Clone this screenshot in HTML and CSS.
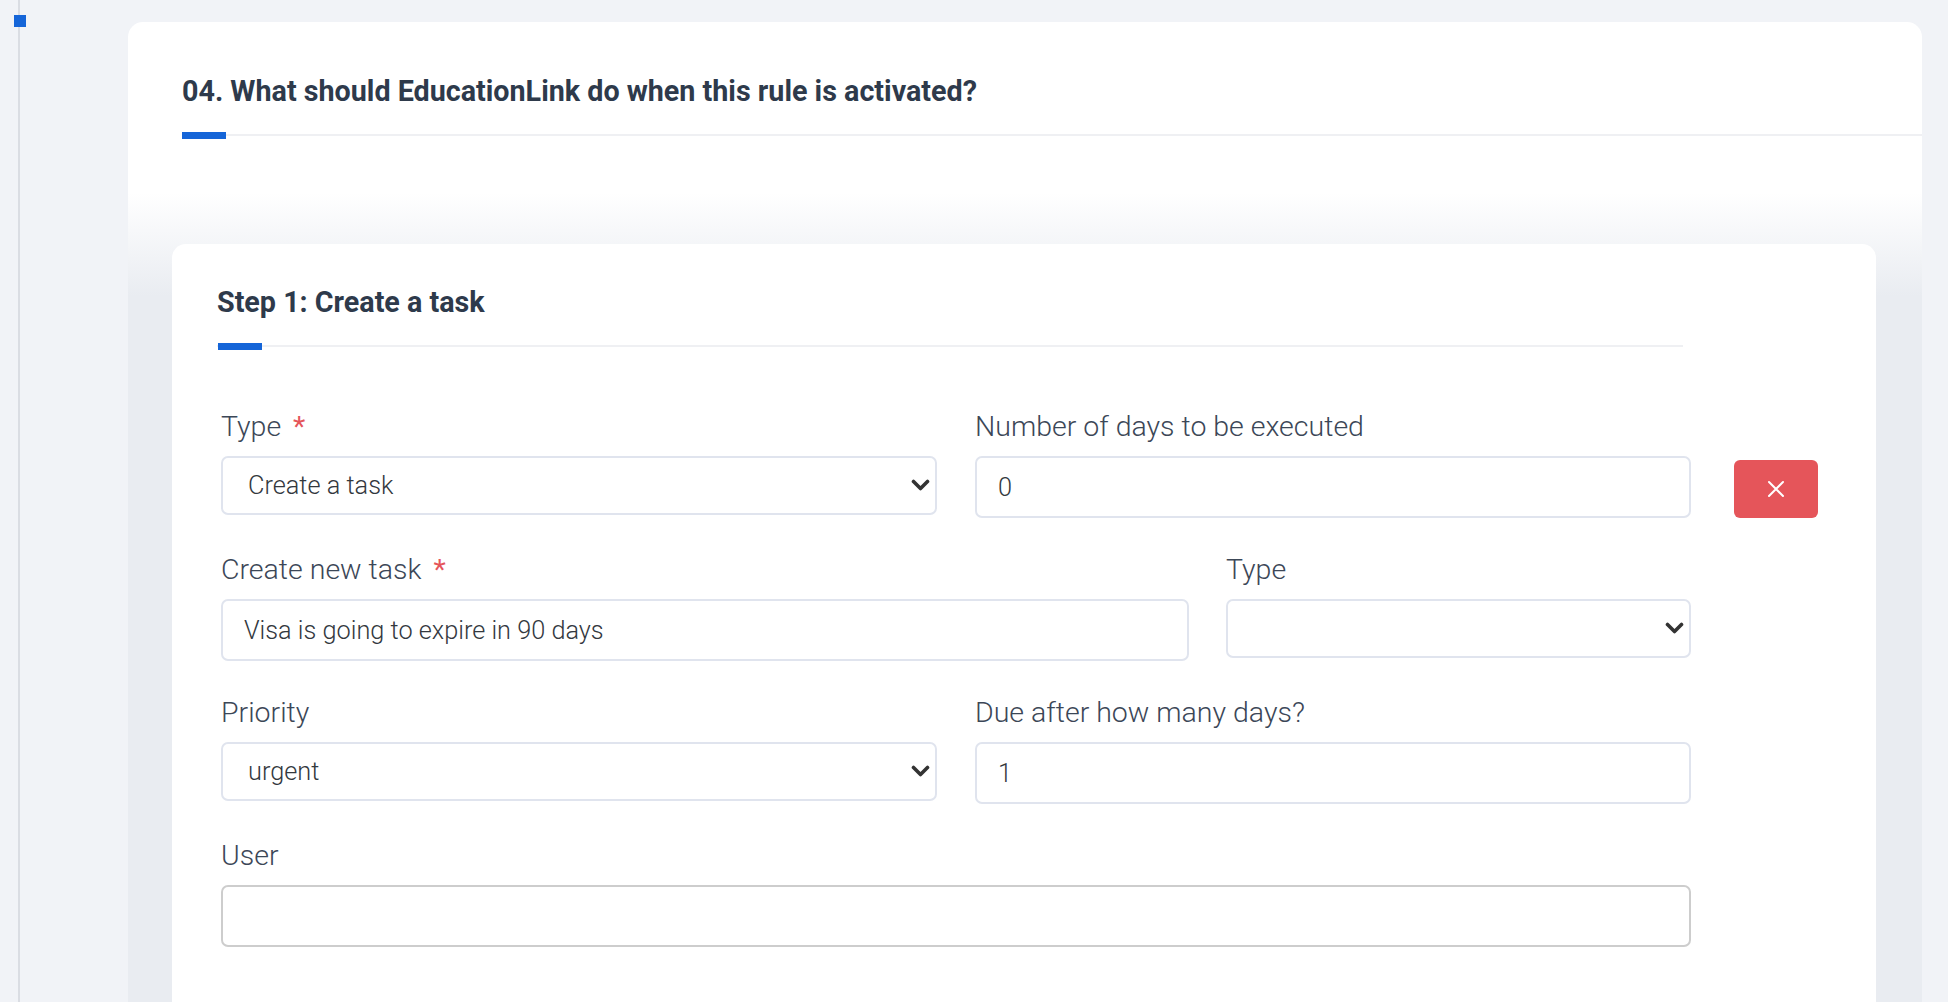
FILE: index.html
```html
<!DOCTYPE html>
<html lang="en">
	<head>
		<title>Automation rule - actions</title>
		<meta charset="UTF-8">
		<meta content="width=device-width,initial-scale=1.0" name="viewport">
		<link rel="stylesheet" href="styles.css">
	</head>
	<body>
		<div class="page">
			<aside class="rail">
				<span class="rail-dot"></span>
			</aside>
			<main class="main">
				<section class="panel">
					<header class="panel-head">
						<h2 class="panel-title">04. What should EducationLink do when this rule is activated?</h2>
						<div class="rule"></div>
					</header>
					<div class="panel-body">
						<div class="step">
							<div class="step-head">
								<h3 class="step-title">Step 1: Create a task</h3>
								<div class="rule"></div>
							</div>
							<form class="step-form">
								<div class="line">
									<div class="grid half">
										<div class="field">
											<label>Type <span class="req">*</span></label>
											<div class="select-wrap">
												<select><option>Create a task</option></select>
												<svg class="chev" width="19" height="12" viewBox="0 0 19 12"><path d="M2.5 2.5 L9.5 9.5 L16.5 2.5" fill="none" stroke="#333" stroke-width="3.6" stroke-linecap="round" stroke-linejoin="round"/></svg>
											</div>
										</div>
										<div class="field">
											<label>Number of days to be executed</label>
											<input type="text" value="0">
										</div>
									</div>
									<button type="button" class="btn-remove">
										<svg width="18" height="18" viewBox="0 0 18 18"><path d="M2 2 L16 16 M16 2 L2 16" stroke="#fff" stroke-width="2" stroke-linecap="round"/></svg>
									</button>
								</div>
								<div class="grid wide">
									<div class="field">
										<label>Create new task <span class="req">*</span></label>
										<input type="text" value="Visa is going to expire in 90 days">
									</div>
									<div class="field">
										<label>Type</label>
										<div class="select-wrap">
											<select><option></option></select>
											<svg class="chev" width="19" height="12" viewBox="0 0 19 12"><path d="M2.5 2.5 L9.5 9.5 L16.5 2.5" fill="none" stroke="#333" stroke-width="3.6" stroke-linecap="round" stroke-linejoin="round"/></svg>
										</div>
									</div>
								</div>
								<div class="grid half">
									<div class="field">
										<label>Priority</label>
										<div class="select-wrap">
											<select><option>urgent</option></select>
											<svg class="chev" width="19" height="12" viewBox="0 0 19 12"><path d="M2.5 2.5 L9.5 9.5 L16.5 2.5" fill="none" stroke="#333" stroke-width="3.6" stroke-linecap="round" stroke-linejoin="round"/></svg>
										</div>
									</div>
									<div class="field">
										<label>Due after how many days?</label>
										<input type="text" value="1">
									</div>
								</div>
								<div class="grid full">
									<div class="field">
										<label>User</label>
										<input type="text" class="user-input" value="">
									</div>
								</div>
							</form>
						</div>
					</div>
				</section>
			</main>
		</div>
	</body>
</html>
```

FILE: styles.css
```css
*{box-sizing:border-box;}
html,body{margin:0;height:100%;overflow:hidden;}
body{background:#f1f3f7;font-family:Roboto,"Liberation Sans",sans-serif;color:#3e4859;}

.page{display:flex;min-height:100%;}
.rail{width:128px;flex:none;position:relative;}
.rail::before{content:"";display:block;margin-left:18px;width:2px;height:100%;background:#dadde3;}
.rail-dot{position:absolute;left:14px;top:15px;width:12px;height:12px;background:#1565d8;}

.main{flex:1;padding:22px 26px 0 0;}
.panel{background:#fff;border-radius:15px 15px 0 0;overflow:hidden;min-height:1000px;display:flex;flex-direction:column;}
.panel-head{padding:52px 0 0 54px;}
.panel-title{margin:0;font-size:28.7px;line-height:34px;font-weight:700;color:#2e3a4b;}

.rule{position:relative;height:2px;margin-top:26px;background:#eff0f3;}
.rule::before{content:"";position:absolute;left:0;top:-2px;width:44px;height:7px;background:#1565d8;}

.panel-body{flex:1;padding:108px 46px 0 44px;background:linear-gradient(to bottom,#fff 57px,#e9ecf1 160px);}
.step{background:#fff;border-radius:14px 14px 0 0;padding:41px 0 90px 45px;min-height:800px;}
.step-head{margin-right:193px;}
.step-title{margin:0;font-size:28.7px;line-height:34px;font-weight:700;color:#2e3a4b;}
.step-head .rule::before{left:1px;}

.step-form{padding:63px 0 0 4px;display:flex;flex-direction:column;gap:35px;}
.line{display:flex;align-items:flex-end;}
.grid{display:grid;width:1470px;}
.half{grid-template-columns:716px 716px;column-gap:38px;}
.wide{grid-template-columns:968px 465px;column-gap:37px;}
.full{grid-template-columns:1470px;}

.field label{display:block;font-size:28.5px;line-height:34px;font-weight:300;color:#3c4757;margin-bottom:12px;}
.req{color:#e5555a;font-weight:400;padding-left:5px;}

.field input,.field select{display:block;width:100%;font-family:Roboto,"Liberation Sans",sans-serif;font-size:25.3px;font-weight:300;color:#33383e;background:#fff;border:2px solid #e0e4ee;border-radius:7px;outline:none;}
.field input{height:62px;padding:0 21px;}
.field select{height:59px;padding:0 48px 0 25px;-webkit-appearance:none;appearance:none;}
.field .user-input{border-color:#cdcdcd;}

.select-wrap{position:relative;}
.chev{position:absolute;right:7px;top:23px;pointer-events:none;}

.btn-remove{flex:none;margin-left:43px;width:84px;height:58px;border:none;border-radius:6px;background:#e5555a;display:flex;align-items:center;justify-content:center;padding:0;}
```
